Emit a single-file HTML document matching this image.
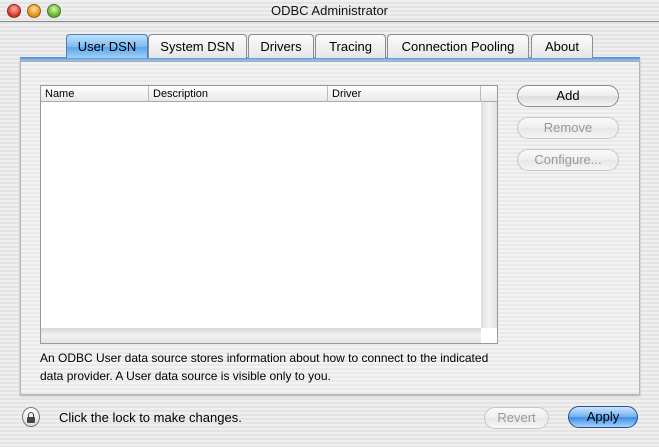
<!DOCTYPE html>
<html><head><style>
*{margin:0;padding:0;box-sizing:border-box}
body{width:659px;height:447px;overflow:hidden;font-family:"Liberation Sans",sans-serif;position:relative;
background:repeating-linear-gradient(#efefef 0 2px,#e4e4e4 2px 4px);}
.a{position:absolute}
.title{top:3px;left:0;width:659px;text-align:center;font-size:13px;color:#111}
.tl{width:14px;height:14px;border-radius:50%;top:4px;border:1px solid rgba(0,0,0,.35)}
.tab{top:34px;height:24px;border:1px solid #8d8d8d;border-bottom:none;border-radius:4px 4px 0 0;
background:linear-gradient(#fbfbfb,#e6e6e6);font-size:13px;text-align:center;line-height:23px;color:#000}
.sel{background:linear-gradient(#bfe0fb,#7dbcf2 50%,#5aa6ec 55%,#9fd0f7);border-color:#4a7fb8}
.panel{left:20px;top:58px;width:620px;height:337px;border:1px solid #b4b4b4;border-top:none;
background:repeating-linear-gradient(#f3f3f3 0 2px,#e9e9e9 2px 4px);box-shadow:0 1px 2px rgba(0,0,0,.25)}
.btn{height:22px;border:1px solid #8a8a8a;border-radius:11px;background:linear-gradient(#fff,#ececec 50%,#dcdcdc 52%,#f6f6f6);
font-size:13px;text-align:center;line-height:20px}
.dis{border-color:#c6c6c6;color:#999;background:linear-gradient(#fafafa,#eee 50%,#e6e6e6 52%,#f6f6f6)}
.th{top:0;height:16px;font-size:11px;line-height:16px;padding-left:4px;border-right:1px solid #bbb}
</style></head><body>
<div class="a tl" style="left:7px;background:radial-gradient(circle at 50% 35%,#ffb0a8,#d33020 70%)"></div>
<div class="a tl" style="left:27px;background:radial-gradient(circle at 50% 35%,#ffe0a0,#e08a10 70%)"></div>
<div class="a tl" style="left:47px;background:radial-gradient(circle at 50% 35%,#d8f5a8,#5fae28 70%)"></div>
<div class="a title">ODBC Administrator</div>
<div class="a" style="left:0;top:21px;width:659px;height:1px;background:#888"></div>

<div class="a panel"></div>
<div class="a" style="left:20px;top:57px;width:620px;height:5px;background:linear-gradient(#4a8ad0,#9cc7f0);border-bottom:1px solid #aaa"></div>
<div class="a tab sel" style="left:66px;width:82px">User DSN</div>
<div class="a tab" style="left:148px;width:99px">System DSN</div>
<div class="a tab" style="left:248px;width:66px">Drivers</div>
<div class="a tab" style="left:315px;width:71px">Tracing</div>
<div class="a tab" style="left:387px;width:142px">Connection Pooling</div>
<div class="a tab" style="left:531px;width:62px">About</div>

<div class="a" style="left:40px;top:85px;width:458px;height:259px;border:1px solid #999;background:#fff">
 <div class="a" style="left:0;top:0;width:456px;height:16px;background:linear-gradient(#fff,#e8e8e8);border-bottom:1px solid #aaa"></div>
 <div class="a th" style="left:0;width:108px">Name</div>
 <div class="a th" style="left:108px;width:179px">Description</div>
 <div class="a th" style="left:287px;width:153px">Driver</div>
 <div class="a" style="left:440px;top:16px;width:16px;height:226px;background:linear-gradient(90deg,#ddd,#f4f4f4,#e2e2e2)"></div>
 <div class="a" style="left:0;top:242px;width:440px;height:15px;background:linear-gradient(#d8d8d8,#f2f2f2,#e4e4e4)"></div>
</div>

<div class="a btn" style="left:517px;top:85px;width:102px">Add</div>
<div class="a btn dis" style="left:517px;top:117px;width:102px">Remove</div>
<div class="a btn dis" style="left:517px;top:149px;width:102px">Configure...</div>

<div class="a" style="left:40px;top:349px;font-size:12px;line-height:18px;color:#000">An ODBC User data source stores information about how to connect to the indicated<br>data provider. A User data source is visible only to you.</div>

<div class="a" style="left:22px;top:407px;width:18px;height:20px;border:1px solid #777;border-radius:50%;background:linear-gradient(#fff,#ddd)"></div>
<div class="a" style="left:28px;top:412px;width:6px;height:6px;border:1.5px solid #444;border-bottom:none;border-radius:3px 3px 0 0"></div>
<div class="a" style="left:27px;top:417px;width:8px;height:6px;background:#444;border-radius:1px"></div>
<div class="a" style="left:59px;top:410px;font-size:13px">Click the lock to make changes.</div>

<div class="a btn dis" style="left:484px;top:407px;width:65px">Revert</div>
<div class="a btn" style="left:568px;top:406px;width:70px;border-color:#2a4f8a;background:linear-gradient(#cde6fd,#6db0f2 50%,#3d8ce6 52%,#a6d4fb)">Apply</div>
</body></html>
